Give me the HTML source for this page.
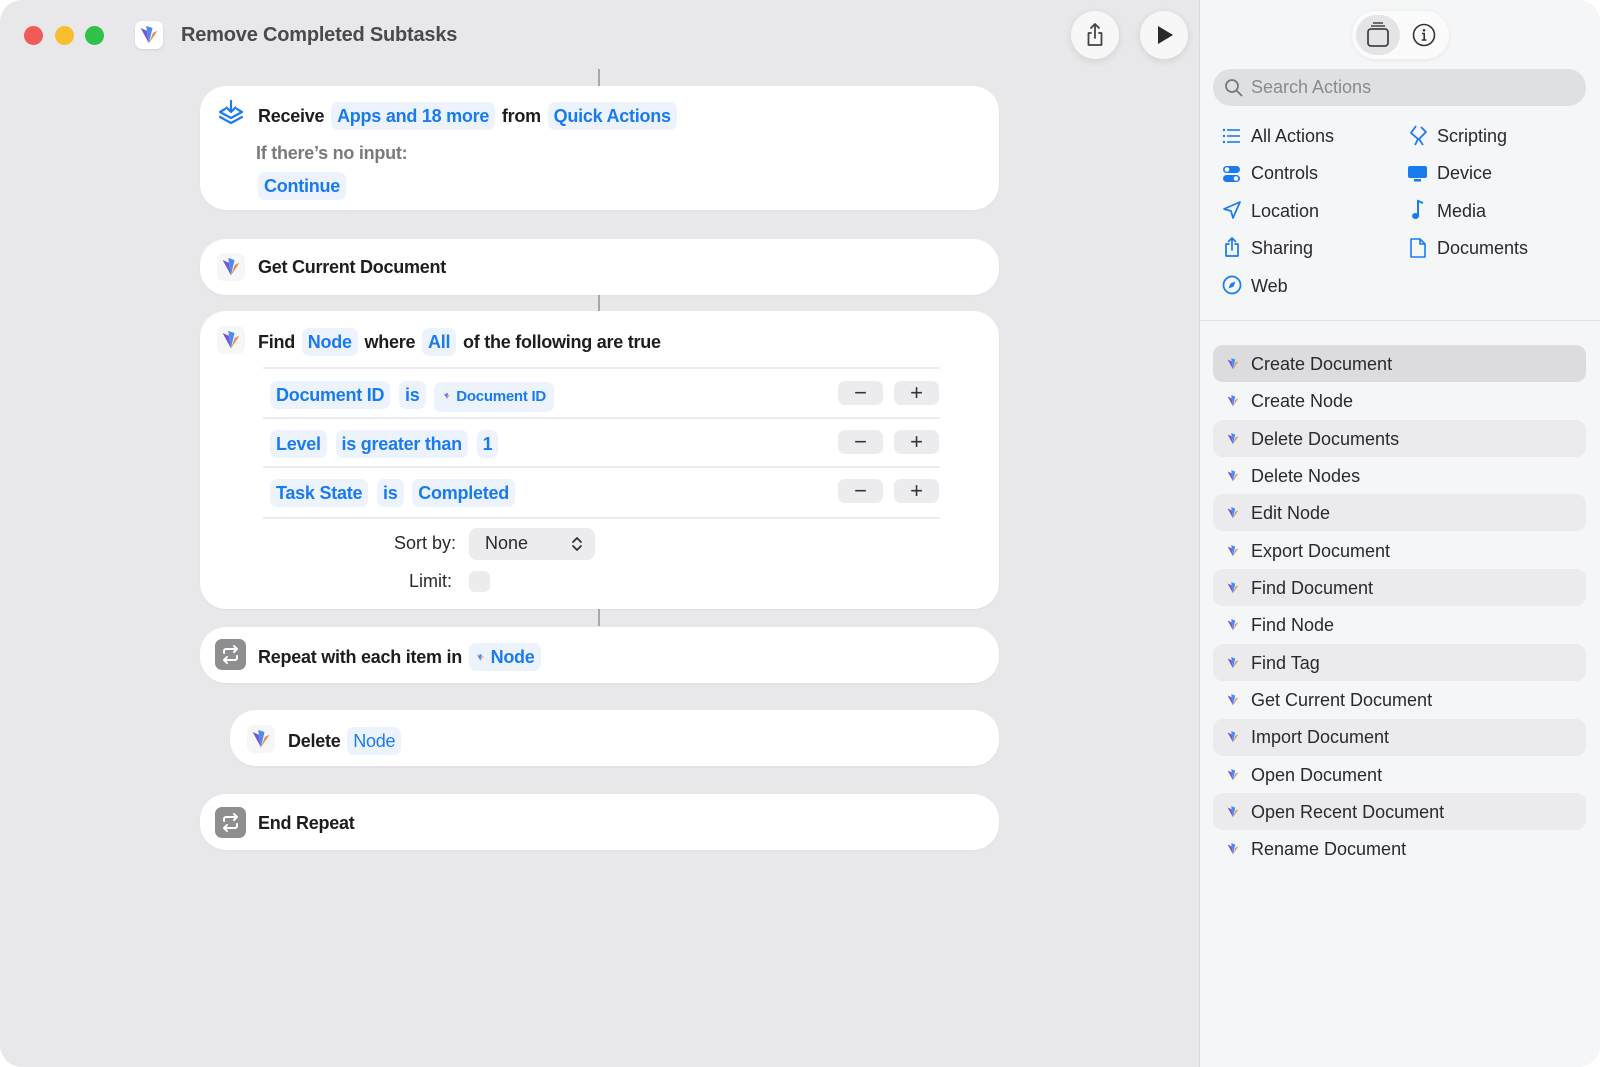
<!DOCTYPE html>
<html><head><meta charset="utf-8"><style>
*{box-sizing:border-box;margin:0;padding:0}
body{width:1600px;height:1067px;background:#fff;font-family:"Liberation Sans",sans-serif;position:relative;overflow:hidden}
.win{position:absolute;left:0;top:0;width:1600px;height:1067px;border-radius:22px;background:#e8e8ea;overflow:hidden}
.side{position:absolute;left:1199px;top:0;width:401px;height:1067px;background:#f5f6f7;border-left:1px solid #d9d9db}
.a{position:absolute}
.card{position:absolute;left:200px;width:799px;background:#fff;border-radius:26px;box-shadow:0 1px 2px rgba(0,0,0,.04)}
.t{position:absolute;font-size:18px;font-weight:bold;color:#1d1d1f;white-space:nowrap;line-height:24px;letter-spacing:-0.25px}
.tk{display:inline-block;padding:2px 6px;border-radius:7px;background:#edf3fc;color:#1a7bef;margin:0 2px}
.line{position:absolute;width:2px;background:#a8a8aa;left:598px}
.sep{position:absolute;left:263px;width:677px;height:2px;background:#ececee}
.btn{position:absolute;width:45px;height:24px;border-radius:7px;background:#ececee;color:#333;font-size:22px;text-align:center;line-height:23px;font-weight:normal}
.cat{position:absolute;font-size:18px;color:#2a2a2c;line-height:22px}
.row{position:absolute;left:1213px;width:373px;height:37px;border-radius:10px}
.rt{position:absolute;left:1251px;font-size:18px;color:#2a2a2c;line-height:22px}
.ri{position:absolute;left:1224px}
.rep{position:absolute;width:31px;height:31px;border-radius:7px;background:#8e8e90}
</style></head><body>
<div class="win">
<div class="a" style="left:24px;top:26px;width:19px;height:19px;border-radius:50%;background:#f25a56"></div>
<div class="a" style="left:55px;top:26px;width:19px;height:19px;border-radius:50%;background:#f8be2e"></div>
<div class="a" style="left:85px;top:26px;width:19px;height:19px;border-radius:50%;background:#2fc246"></div>
<div class="a" style="left:135px;top:21px;width:28px;height:28px;border-radius:7px;background:#fff;box-shadow:0 1px 2px rgba(0,0,0,.1)"><svg width="28" height="28" viewBox="0 0 20 20"><path d="M4 5 L10 16 L8.5 7Z" fill="#7457d6"/><path d="M8 3.5 L10 16 L12.5 5Z" fill="#4a8df0"/><path d="M16 7 L10 16 L12.8 8.5Z" fill="#f0864a"/></svg></div>
<div class="a" style="left:181px;top:23px;font-size:20px;font-weight:bold;color:#4a4a4c;line-height:24px;letter-spacing:-0.2px">Remove Completed Subtasks</div>
<div class="a" style="left:1071px;top:11px;width:48px;height:48px;border-radius:50%;background:#f7f7f8;box-shadow:0 2px 8px rgba(0,0,0,.1)"><svg width="48" height="48" viewBox="0 0 48 48"><path d="M20 22h-2.5v12h13V22H28M24 13v14M20 17l4-4 4 4" fill="none" stroke="#444" stroke-width="1.8" stroke-linecap="round" stroke-linejoin="round"/></svg></div>
<div class="a" style="left:1140px;top:11px;width:48px;height:48px;border-radius:50%;background:#f7f7f8;box-shadow:0 2px 8px rgba(0,0,0,.1)"><svg width="48" height="48" viewBox="0 0 48 48"><path d="M18 15v18l15-9z" fill="#2a2a2c"/></svg></div>

<div class="line" style="top:69px;height:17px"></div>
<div class="line" style="top:295px;height:16px"></div>
<div class="line" style="top:609px;height:17px"></div>

<div class="card" style="top:86px;height:124px"></div>
<svg class="a" style="left:217px;top:99px" width="28" height="30" viewBox="0 0 28 30"><path d="M14 2v11M9.5 8.5L14 13l4.5-4.5M8 10L3 13l11 6 11-6-5-3M3 18l11 6 11-6" fill="none" stroke="#1a7bef" stroke-width="2.2" stroke-linecap="round" stroke-linejoin="round"/></svg>
<div class="t" style="left:258px;top:102px">Receive <span class="tk">Apps and 18 more</span> from <span class="tk">Quick Actions</span></div>
<div class="t" style="left:256px;top:141px;color:#7a7a7c">If there’s no input:</div>
<div class="t" style="left:256px;top:172px"><span class="tk">Continue</span></div>

<div class="card" style="top:239px;height:56px"></div>
<div class="a" style="left:217px;top:253px;width:28px;height:28px;border-radius:7px;background:#f6f6f7"><svg width="28" height="28" viewBox="0 0 20 20"><path d="M4 5 L10 16 L8.5 7Z" fill="#7457d6"/><path d="M8 3.5 L10 16 L12.5 5Z" fill="#4a8df0"/><path d="M16 7 L10 16 L12.8 8.5Z" fill="#f0864a"/></svg></div>
<div class="t" style="left:258px;top:255px">Get Current Document</div>

<div class="card" style="top:311px;height:298px"></div>
<div class="a" style="left:217px;top:326px;width:28px;height:28px;border-radius:7px;background:#f6f6f7"><svg width="28" height="28" viewBox="0 0 20 20"><path d="M4 5 L10 16 L8.5 7Z" fill="#7457d6"/><path d="M8 3.5 L10 16 L12.5 5Z" fill="#4a8df0"/><path d="M16 7 L10 16 L12.8 8.5Z" fill="#f0864a"/></svg></div>
<div class="t" style="left:258px;top:328px">Find <span class="tk">Node</span> where <span class="tk">All</span> of the following are true</div>
<div class="sep" style="top:367px"></div>
<div class="t" style="left:268px;top:381px"><span class="tk">Document ID</span> <span class="tk">is</span> <span class="tk" style="font-size:15px;padding:3px 8px"><svg width="10" height="10" viewBox="0 0 20 20"><path d="M4 5 L10 16 L8.5 7Z" fill="#7457d6"/><path d="M8 3.5 L10 16 L12.5 5Z" fill="#4a8df0"/><path d="M16 7 L10 16 L12.8 8.5Z" fill="#f0864a"/></svg> Document ID</span></div>
<div class="btn" style="left:838px;top:381px">−</div><div class="btn" style="left:894px;top:381px">+</div>
<div class="sep" style="top:417px"></div>
<div class="t" style="left:268px;top:430px"><span class="tk">Level</span> <span class="tk">is greater than</span> <span class="tk">1</span></div>
<div class="btn" style="left:838px;top:430px">−</div><div class="btn" style="left:894px;top:430px">+</div>
<div class="sep" style="top:466px"></div>
<div class="t" style="left:268px;top:479px"><span class="tk">Task State</span> <span class="tk">is</span> <span class="tk">Completed</span></div>
<div class="btn" style="left:838px;top:479px">−</div><div class="btn" style="left:894px;top:479px">+</div>
<div class="sep" style="top:517px"></div>
<div class="a" style="left:394px;top:533px;font-size:18px;color:#2a2a2c">Sort by:</div>
<div class="a" style="left:469px;top:528px;width:126px;height:32px;border-radius:8px;background:#ececee"></div>
<div class="a" style="left:485px;top:533px;font-size:18px;color:#2a2a2c">None</div>
<svg class="a" style="left:571px;top:535px" width="12" height="18" viewBox="0 0 12 18"><path d="M2 7l4-4 4 4M2 11l4 4 4-4" fill="none" stroke="#333" stroke-width="1.8" stroke-linecap="round" stroke-linejoin="round"/></svg>
<div class="a" style="left:409px;top:571px;font-size:18px;color:#2a2a2c">Limit:</div>
<div class="a" style="left:469px;top:571px;width:21px;height:21px;border-radius:6px;background:#ececee"></div>

<div class="card" style="top:627px;height:56px"></div>
<div class="rep" style="left:215px;top:639px"><svg width="31" height="31" viewBox="0 0 31 31"><path d="M9 14v-2a2 2 0 0 1 2-2h11M19 7l3 3-3 3M22 17v2a2 2 0 0 1-2 2H9M12 24l-3-3 3-3" fill="none" stroke="#fff" stroke-width="2" stroke-linecap="round" stroke-linejoin="round"/></svg></div>
<div class="t" style="left:258px;top:643px">Repeat with each item in <span class="tk"><svg width="11" height="11" viewBox="0 0 20 20"><path d="M4 5 L10 16 L8.5 7Z" fill="#7457d6"/><path d="M8 3.5 L10 16 L12.5 5Z" fill="#4a8df0"/><path d="M16 7 L10 16 L12.8 8.5Z" fill="#f0864a"/></svg> Node</span></div>

<div class="card" style="left:230px;width:769px;top:710px;height:56px"></div>
<div class="a" style="left:247px;top:725px;width:28px;height:28px;border-radius:7px;background:#f6f6f7"><svg width="28" height="28" viewBox="0 0 20 20"><path d="M4 5 L10 16 L8.5 7Z" fill="#7457d6"/><path d="M8 3.5 L10 16 L12.5 5Z" fill="#4a8df0"/><path d="M16 7 L10 16 L12.8 8.5Z" fill="#f0864a"/></svg></div>
<div class="t" style="left:288px;top:727px">Delete <span class="tk" style="font-weight:normal">Node</span></div>

<div class="card" style="top:794px;height:56px"></div>
<div class="rep" style="left:215px;top:807px"><svg width="31" height="31" viewBox="0 0 31 31"><path d="M9 14v-2a2 2 0 0 1 2-2h11M19 7l3 3-3 3M22 17v2a2 2 0 0 1-2 2H9M12 24l-3-3 3-3" fill="none" stroke="#fff" stroke-width="2" stroke-linecap="round" stroke-linejoin="round"/></svg></div>
<div class="t" style="left:258px;top:811px">End Repeat</div>

<div class="side"></div>
<div class="a" style="left:1352px;top:11px;width:97px;height:48px;border-radius:24px;background:#fbfbfc;box-shadow:0 1px 6px rgba(0,0,0,.06)"></div>
<div class="a" style="left:1356px;top:15px;width:44px;height:40px;border-radius:20px;background:#e4e4e6"></div>
<svg class="a" style="left:1365px;top:20px" width="26" height="30" viewBox="0 0 26 30"><rect x="3" y="9" width="20" height="17" rx="3" fill="none" stroke="#444" stroke-width="1.8"/><path d="M6 6h14M8 3h10" stroke="#444" stroke-width="1.5"/></svg>
<svg class="a" style="left:1411px;top:22px" width="26" height="26" viewBox="0 0 26 26"><circle cx="13" cy="13" r="10.5" fill="none" stroke="#333" stroke-width="1.6"/><circle cx="13" cy="8.3" r="1.3" fill="#333"/><path d="M11 11.5h2.2v6.5M10.8 18h4.6" fill="none" stroke="#333" stroke-width="1.6"/></svg>
<div class="a" style="left:1213px;top:69px;width:373px;height:37px;border-radius:18px;background:#dfe0e2"></div>
<svg class="a" style="left:1224px;top:78px" width="20" height="20" viewBox="0 0 20 20"><circle cx="8" cy="8" r="6" fill="none" stroke="#777" stroke-width="1.8"/><path d="M12.5 12.5l5 5" stroke="#777" stroke-width="1.8" stroke-linecap="round"/></svg>
<div class="a" style="left:1251px;top:77px;font-size:18px;color:#8a8a8c">Search Actions</div>

<svg class="a" style="left:1222px;top:127px" width="20" height="18" viewBox="0 0 20 18"><g fill="#1a7bef"><circle cx="2" cy="3" r="1.2"/><circle cx="2" cy="9" r="1.2"/><circle cx="2" cy="15" r="1.2"/><rect x="5" y="2.2" width="13" height="1.6"/><rect x="5" y="8.2" width="13" height="1.6"/><rect x="5" y="14.2" width="13" height="1.6"/></g></svg>
<div class="cat" style="left:1251px;top:125px">All Actions</div>
<svg class="a" style="left:1408px;top:124px" width="20" height="24" viewBox="0 0 20 24"><path d="M8 2l-5 7 7 6-3 6M13 3l5 5-7 7 4 6" fill="none" stroke="#1a7bef" stroke-width="1.8" stroke-linejoin="round"/></svg>
<div class="cat" style="left:1437px;top:125px">Scripting</div>
<svg class="a" style="left:1222px;top:164px" width="20" height="20" viewBox="0 0 20 20"><rect x="1" y="2" width="17" height="7" rx="3.5" fill="#1a7bef"/><rect x="1" y="11" width="17" height="7" rx="3.5" fill="#1a7bef"/><circle cx="5" cy="5.5" r="2.3" fill="#fff"/><circle cx="14" cy="14.5" r="2.3" fill="#fff"/></svg>
<div class="cat" style="left:1251px;top:162px">Controls</div>
<svg class="a" style="left:1407px;top:164px" width="22" height="20" viewBox="0 0 22 20"><rect x="1" y="2" width="19" height="12" rx="2" fill="#1a7bef"/><rect x="7" y="15" width="7" height="2.5" fill="#1a7bef"/></svg>
<div class="cat" style="left:1437px;top:162px">Device</div>
<svg class="a" style="left:1222px;top:200px" width="20" height="20" viewBox="0 0 20 20"><path d="M18 2L2 9l7 2 2 7z" fill="none" stroke="#1a7bef" stroke-width="1.7" stroke-linejoin="round"/></svg>
<div class="cat" style="left:1251px;top:200px">Location</div>
<svg class="a" style="left:1410px;top:199px" width="16" height="22" viewBox="0 0 16 22"><path d="M8 17V2l5 2" fill="none" stroke="#1a7bef" stroke-width="2"/><ellipse cx="5.5" cy="17" rx="3.5" ry="3" fill="#1a7bef"/></svg>
<div class="cat" style="left:1437px;top:200px">Media</div>
<svg class="a" style="left:1222px;top:236px" width="20" height="22" viewBox="0 0 20 22"><path d="M7 8H4v12h12V8h-3M10 2v12M6.5 5.5L10 2l3.5 3.5" fill="none" stroke="#1a7bef" stroke-width="1.7" stroke-linecap="round" stroke-linejoin="round"/></svg>
<div class="cat" style="left:1251px;top:237px">Sharing</div>
<svg class="a" style="left:1409px;top:237px" width="18" height="22" viewBox="0 0 18 22"><path d="M2 2h9l5 5v13H2z M11 2v5h5" fill="none" stroke="#1a7bef" stroke-width="1.6" stroke-linejoin="round"/></svg>
<div class="cat" style="left:1437px;top:237px">Documents</div>
<svg class="a" style="left:1222px;top:275px" width="20" height="20" viewBox="0 0 20 20"><circle cx="10" cy="10" r="8.5" fill="none" stroke="#1a7bef" stroke-width="1.7"/><path d="M13.5 6.5L11.5 11.5 6.5 13.5 8.5 8.5z" fill="#1a7bef"/></svg>
<div class="cat" style="left:1251px;top:275px">Web</div>
<div class="a" style="left:1200px;top:320px;width:400px;height:1px;background:#e0e0e2"></div>

<div class="row" style="top:345px;background:#dcdcde"></div>
<div class="row" style="top:420px;background:#ebebed"></div>
<div class="row" style="top:494px;background:#ebebed"></div>
<div class="row" style="top:569px;background:#ebebed"></div>
<div class="row" style="top:644px;background:#ebebed"></div>
<div class="row" style="top:719px;background:#ebebed"></div>
<div class="row" style="top:793px;background:#ebebed"></div>

<div class="rt" style="top:353px">Create Document</div>
<div class="rt" style="top:390px">Create Node</div>
<div class="rt" style="top:428px">Delete Documents</div>
<div class="rt" style="top:465px">Delete Nodes</div>
<div class="rt" style="top:502px">Edit Node</div>
<div class="rt" style="top:540px">Export Document</div>
<div class="rt" style="top:577px">Find Document</div>
<div class="rt" style="top:614px">Find Node</div>
<div class="rt" style="top:652px">Find Tag</div>
<div class="rt" style="top:689px">Get Current Document</div>
<div class="rt" style="top:726px">Import Document</div>
<div class="rt" style="top:764px">Open Document</div>
<div class="rt" style="top:801px">Open Recent Document</div>
<div class="rt" style="top:838px">Rename Document</div>

<svg class="ri" style="top:355px" width="18" height="18" viewBox="0 0 20 20"><path d="M4 5 L10 16 L8.5 7Z" fill="#7457d6"/><path d="M8 3.5 L10 16 L12.5 5Z" fill="#4a8df0"/><path d="M16 7 L10 16 L12.8 8.5Z" fill="#f0864a"/></svg>
<svg class="ri" style="top:392px" width="18" height="18" viewBox="0 0 20 20"><path d="M4 5 L10 16 L8.5 7Z" fill="#7457d6"/><path d="M8 3.5 L10 16 L12.5 5Z" fill="#4a8df0"/><path d="M16 7 L10 16 L12.8 8.5Z" fill="#f0864a"/></svg>
<svg class="ri" style="top:430px" width="18" height="18" viewBox="0 0 20 20"><path d="M4 5 L10 16 L8.5 7Z" fill="#7457d6"/><path d="M8 3.5 L10 16 L12.5 5Z" fill="#4a8df0"/><path d="M16 7 L10 16 L12.8 8.5Z" fill="#f0864a"/></svg>
<svg class="ri" style="top:467px" width="18" height="18" viewBox="0 0 20 20"><path d="M4 5 L10 16 L8.5 7Z" fill="#7457d6"/><path d="M8 3.5 L10 16 L12.5 5Z" fill="#4a8df0"/><path d="M16 7 L10 16 L12.8 8.5Z" fill="#f0864a"/></svg>
<svg class="ri" style="top:504px" width="18" height="18" viewBox="0 0 20 20"><path d="M4 5 L10 16 L8.5 7Z" fill="#7457d6"/><path d="M8 3.5 L10 16 L12.5 5Z" fill="#4a8df0"/><path d="M16 7 L10 16 L12.8 8.5Z" fill="#f0864a"/></svg>
<svg class="ri" style="top:542px" width="18" height="18" viewBox="0 0 20 20"><path d="M4 5 L10 16 L8.5 7Z" fill="#7457d6"/><path d="M8 3.5 L10 16 L12.5 5Z" fill="#4a8df0"/><path d="M16 7 L10 16 L12.8 8.5Z" fill="#f0864a"/></svg>
<svg class="ri" style="top:579px" width="18" height="18" viewBox="0 0 20 20"><path d="M4 5 L10 16 L8.5 7Z" fill="#7457d6"/><path d="M8 3.5 L10 16 L12.5 5Z" fill="#4a8df0"/><path d="M16 7 L10 16 L12.8 8.5Z" fill="#f0864a"/></svg>
<svg class="ri" style="top:616px" width="18" height="18" viewBox="0 0 20 20"><path d="M4 5 L10 16 L8.5 7Z" fill="#7457d6"/><path d="M8 3.5 L10 16 L12.5 5Z" fill="#4a8df0"/><path d="M16 7 L10 16 L12.8 8.5Z" fill="#f0864a"/></svg>
<svg class="ri" style="top:654px" width="18" height="18" viewBox="0 0 20 20"><path d="M4 5 L10 16 L8.5 7Z" fill="#7457d6"/><path d="M8 3.5 L10 16 L12.5 5Z" fill="#4a8df0"/><path d="M16 7 L10 16 L12.8 8.5Z" fill="#f0864a"/></svg>
<svg class="ri" style="top:691px" width="18" height="18" viewBox="0 0 20 20"><path d="M4 5 L10 16 L8.5 7Z" fill="#7457d6"/><path d="M8 3.5 L10 16 L12.5 5Z" fill="#4a8df0"/><path d="M16 7 L10 16 L12.8 8.5Z" fill="#f0864a"/></svg>
<svg class="ri" style="top:728px" width="18" height="18" viewBox="0 0 20 20"><path d="M4 5 L10 16 L8.5 7Z" fill="#7457d6"/><path d="M8 3.5 L10 16 L12.5 5Z" fill="#4a8df0"/><path d="M16 7 L10 16 L12.8 8.5Z" fill="#f0864a"/></svg>
<svg class="ri" style="top:766px" width="18" height="18" viewBox="0 0 20 20"><path d="M4 5 L10 16 L8.5 7Z" fill="#7457d6"/><path d="M8 3.5 L10 16 L12.5 5Z" fill="#4a8df0"/><path d="M16 7 L10 16 L12.8 8.5Z" fill="#f0864a"/></svg>
<svg class="ri" style="top:803px" width="18" height="18" viewBox="0 0 20 20"><path d="M4 5 L10 16 L8.5 7Z" fill="#7457d6"/><path d="M8 3.5 L10 16 L12.5 5Z" fill="#4a8df0"/><path d="M16 7 L10 16 L12.8 8.5Z" fill="#f0864a"/></svg>
<svg class="ri" style="top:840px" width="18" height="18" viewBox="0 0 20 20"><path d="M4 5 L10 16 L8.5 7Z" fill="#7457d6"/><path d="M8 3.5 L10 16 L12.5 5Z" fill="#4a8df0"/><path d="M16 7 L10 16 L12.8 8.5Z" fill="#f0864a"/></svg>
</div>
</body></html>
